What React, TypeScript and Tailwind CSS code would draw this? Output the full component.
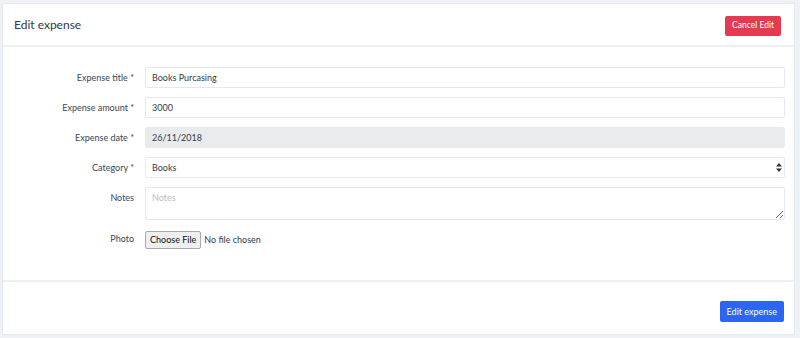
import React from 'react';

const font = { fontFamily: 'Lato, "Open Sans", sans-serif' };

const Field: React.FC<{ label: string; children: React.ReactNode; top?: boolean }> = ({ label, children, top }) => (
  <div className={`flex ${top ? 'items-start' : 'items-center'}`}>
    <label
      className={`w-[142px] shrink-0 pr-[11px] text-right text-[9px] leading-[12px] text-[#3b4451] ${top ? 'pt-[5px]' : ''}`}
    >
      {label}
    </label>
    <div className="flex-1">{children}</div>
  </div>
);

const inputCls =
  'block h-[21px] w-full rounded-[2px] border border-[#e5e8ec] px-[6px] text-[9px] text-[#333b45] outline-none';

export default function App() {
  return (
    <div className="min-h-[338px] w-[800px] bg-[#eef2f6] pt-[3px] pl-[2px] pr-[5px]" style={font}>
      <div className="flex flex-col border border-[#e6eaef] bg-white">
        {/* Header */}
        <div className="flex h-[43px] items-center justify-between border-b-2 border-[#eef1f4] pl-[11px] pr-[13px]">
          <h1 className="text-[12px] text-[#2e3a47]">Edit expense</h1>
          <button className="mt-[2px] h-[20px] rounded-[2px] bg-[#e63a52] px-[7px] text-[8.5px] text-white">
            Cancel Edit
          </button>
        </div>

        {/* Body */}
        <div className="flex h-[233px] flex-col gap-[9px] pt-[20px] pr-[9px]">
          <Field label="Expense title *">
            <input defaultValue="Books Purcasing" className={inputCls} />
          </Field>
          <Field label="Expense amount *">
            <input defaultValue="3000" className={inputCls} />
          </Field>
          <Field label="Expense date *">
            <input
              defaultValue="26/11/2018"
              disabled
              className="block h-[21px] w-full rounded-[2px] border border-[#e9ecef] bg-[#e9ecef] px-[6px] text-[9px] text-[#333b45] outline-none"
            />
          </Field>
          <Field label="Category *">
            <div className="relative">
              <select defaultValue="Books" className={`${inputCls} appearance-none bg-white`}>
                <option>Books</option>
              </select>
              <svg className="pointer-events-none absolute right-[3px] top-[6px]" width="6" height="9" viewBox="0 0 6 9">
                <path d="M3 0L6 3.5H0Z" fill="#333" />
                <path d="M3 9L0 5.5H6Z" fill="#333" />
              </svg>
            </div>
          </Field>
          <Field label="Notes" top>
            <textarea
              placeholder="Notes"
              className="block h-[33px] w-full rounded-[2px] border border-[#e5e8ec] px-[6px] pt-[3px] text-[9px] text-[#333b45] outline-none placeholder:text-[#b8bec6]"
            />
          </Field>
          <Field label="Photo">
            <div className="mt-[2px] flex items-center gap-[3px] text-[9px] text-[#333b45]">
              <span className="rounded-[2px] border border-[#a9a9a9] bg-[#efefef] px-[4px] py-[1px] text-[9px] text-[#111]">
                Choose File
              </span>
              <span>No file chosen</span>
            </div>
          </Field>
        </div>

        {/* Footer */}
        <div className="flex h-[54px] items-start justify-end border-t-2 border-[#eef1f4] pt-[19px] pr-[10px]">
          <button className="h-[21px] rounded-[2px] bg-[#2c66f0] px-[7px] text-[9px] text-white">
            Edit expense
          </button>
        </div>
      </div>
    </div>
  );
}
